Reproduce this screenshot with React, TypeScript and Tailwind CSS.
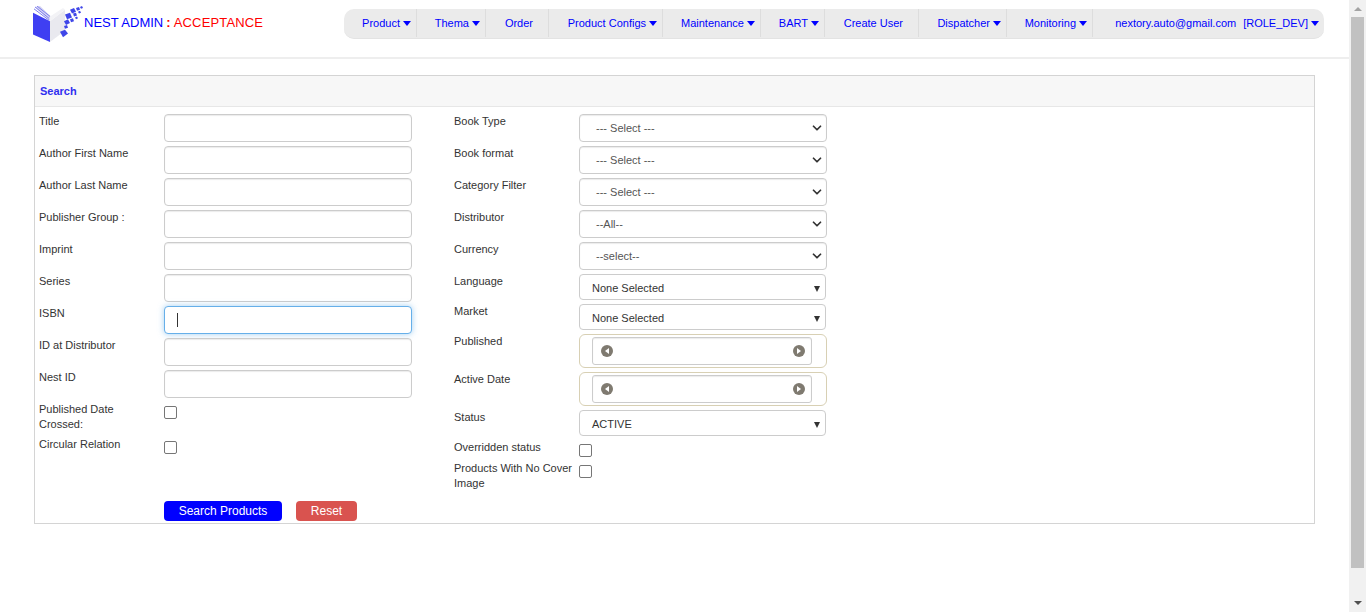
import React from 'react';
import { ChevronDown } from 'lucide-react';

const navItems = [
  { label: 'Product', width: 'w-[73px]', caret: true },
  { label: 'Thema', width: 'w-[69px]', caret: true },
  { label: 'Order', width: 'w-[63px]', caret: false },
  { label: 'Product Configs', width: 'w-[114px]', caret: true },
  { label: 'Maintenance', width: 'w-[98px]', caret: true },
  { label: 'BART', width: 'w-[64px]', caret: true },
  { label: 'Create User', width: 'w-[94px]', caret: false },
  { label: 'Dispatcher', width: 'w-[88px]', caret: true },
  { label: 'Monitoring', width: 'w-[86px]', caret: true },
];

const leftFields = ['Title', 'Author First Name', 'Author Last Name', 'Publisher Group :', 'Imprint', 'Series'];
const leftFieldsAfter = ['ID at Distributor', 'Nest ID'];

const selects = [
  { label: 'Book Type', value: '--- Select ---' },
  { label: 'Book format', value: '--- Select ---' },
  { label: 'Category Filter', value: '--- Select ---' },
  { label: 'Distributor', value: '--All--' },
  { label: 'Currency', value: '--select--' },
];

function Caret() {
  return <span className="ml-[3px] mr-[5px] h-0 w-0 border-x-[4px] border-t-[5px] border-x-transparent border-t-[#0000ff]" />;
}

function Logo() {
  return (
    <svg width="52" height="38" viewBox="0 0 52 40" preserveAspectRatio="none" className="mt-[4px] shrink-0">
      <path d="M18 16 L33 4 L33 26 L18 38 Z" fill="#e9e9ef" />
      <path d="M3 1 L8 0 L19 11 L18 16 Z" fill="#d5d5f2" />
      <path d="M2 3 L17 15 M3 1 L17 13 M5 0 L18 11" stroke="#7a7af0" strokeWidth="1" fill="none" />
      <path d="M18 11 L31 2 L33 4 L18 16 Z" fill="#f3f3f6" />
      <path d="M1 7 L18 16 L18 38 L1 30 Z" fill="#3f3ff2" />
      <g fill="#3f46e8">
        <path d="M38 4 L42 2 L44 6 L40 8 Z" />
        <path d="M44 2 L47 1 L48 4 L45 5 Z" />
        <path d="M48 1 L50 0 L51 2 L49 3 Z" />
        <path d="M33 9 L38 7 L40 12 L35 14 Z" />
        <path d="M41 8 L44 7 L45 10 L42 11 Z" />
        <path d="M46 6 L48 5 L49 7 L47 8 Z" />
        <path d="M32 16 L36 14 L38 18 L34 20 Z" />
        <path d="M38 14 L41 13 L42 16 L39 17 Z" />
        <path d="M43 12 L45 11 L46 13 L44 14 Z" />
        <path d="M32 21 L35 20 L36 23 L33 24 Z" />
        <path d="M28 27 L33 25 L36 29 L31 33 Z" />
      </g>
    </svg>
  );
}

function TextField({ label, focused }: { label: string; focused?: boolean }) {
  return (
    <div className="flex h-7">
      <label className="w-[125px] shrink-0 leading-[15px]">{label}</label>
      <div
        className={`h-7 w-[248px] rounded border bg-white px-3 ${
          focused
            ? 'flex items-center border-[#66afe9] shadow-[0_0_6px_rgba(102,175,233,0.6)]'
            : 'border-[#cccccc] shadow-[inset_0_1px_1px_rgba(0,0,0,0.08)]'
        }`}
      >
        {focused && <span className="h-[14px] w-px bg-[#333333]" />}
      </div>
    </div>
  );
}

function CheckRow({ label, className, boxClass }: { label: string; className: string; boxClass: string }) {
  return (
    <div className={`flex ${className}`}>
      <label className="w-[125px] shrink-0 pr-1 leading-[15px]">{label}</label>
      <span className={`h-[13px] w-[13px] rounded-[2px] border border-[#767676] bg-white ${boxClass}`} />
    </div>
  );
}

function SelectBox({ value }: { value: string }) {
  return (
    <div className="relative flex h-7 w-[248px] items-center rounded border border-[#cccccc] bg-white pl-4 shadow-[inset_0_1px_1px_rgba(0,0,0,0.08)]">
      <span className="text-[#555555]">{value}</span>
      <ChevronDown size={14} strokeWidth={3} className="absolute right-[2px] top-[6px] text-[#333333]" />
    </div>
  );
}

function MultiButton({ value }: { value: string }) {
  return (
    <div className="relative flex h-[26px] w-[247px] items-center rounded border border-[#cccccc] bg-white pl-3 pt-[2px] text-[#333333]">
      {value}
      <span className="absolute right-[5px] top-[11px] h-0 w-0 border-x-[3.5px] border-t-[6px] border-x-transparent border-t-[#333333]" />
    </div>
  );
}

function DateBox() {
  return (
    <div className="flex h-[34px] w-[248px] items-center rounded-md border border-[#d8d0b4] bg-white pl-3">
      <div className="flex h-7 w-[220px] items-center justify-between rounded-[3px] border border-[#cccccc] pl-2 pr-[6px] shadow-[inset_0_1px_1px_rgba(0,0,0,0.08)]">
        <span className="flex h-3 w-3 items-center justify-center rounded-full bg-[#7f7a70]">
          <span className="h-0 w-0 border-y-[3px] border-r-[4px] border-y-transparent border-r-white" />
        </span>
        <span className="flex h-3 w-3 items-center justify-center rounded-full bg-[#7f7a70]">
          <span className="h-0 w-0 border-y-[3px] border-l-[4px] border-y-transparent border-l-white" />
        </span>
      </div>
    </div>
  );
}

export default function App() {
  return (
    <div className="flex h-[612px] overflow-hidden bg-white font-['Liberation_Sans',Arial,sans-serif] text-[11px] text-[#333333]">
      <div className="min-w-0 flex-1">
        {/* Cabecera */}
        <header className="flex h-[59px] border-b-2 border-[#eeeeee]">
          <div className="ml-[32px] mt-[3px] flex h-[40px] w-[312px] items-center">
            <Logo />
            <span className="text-[13px] text-[#0000ff]">NEST ADMIN</span>
            <span className="ml-[3px] text-[13px] tracking-[0.15px] text-[#ff0000]">
              <span className="font-bold">:</span> ACCEPTANCE
            </span>
          </div>
          <nav className="mt-[9px] flex h-[30px] w-[980px] rounded-[10px] border-b border-[#e3e3e3] bg-[#ebebeb] pb-px text-[#0000ff]">
            {navItems.map((item) => (
              <a key={item.label} className={`flex ${item.width} items-center justify-end border-r border-[#dddddd]`}>
                <span className={item.caret ? '' : 'mr-[15px]'}>{item.label}</span>
                {item.caret && <Caret />}
              </a>
            ))}
            <a className="flex flex-1 items-center justify-end">
              <span>nextory.auto@gmail.com</span>
              <span className="ml-[7px]">[ROLE_DEV]</span>
              <Caret />
            </a>
          </nav>
        </header>

        {/* Formulario de búsqueda */}
        <section className="ml-[34px] mt-4 h-[449px] w-[1281px] border border-[#d4d4d4]">
          <div className="flex h-[31px] items-center border-b border-[#e7e7e7] bg-[#f7f7f7] pl-[5px] font-bold text-[#3030f0]">
            Search
          </div>
          <div className="flex pl-1 pt-[7px]">
            <div className="flex w-[415px] flex-col gap-1">
              {leftFields.map((label) => (
                <TextField key={label} label={label} />
              ))}
              <TextField label="ISBN" focused />
              {leftFieldsAfter.map((label) => (
                <TextField key={label} label={label} />
              ))}
              <CheckRow label="Published Date Crossed:" className="h-[30px]" boxClass="mt-1" />
              <CheckRow label="Circular Relation" className="mt-px h-[29px]" boxClass="mt-1" />
            </div>
            <div className="flex flex-col">
              {selects.map((s) => (
                <div key={s.label} className="mb-1 flex h-7">
                  <label className="w-[125px] shrink-0 leading-[15px]">{s.label}</label>
                  <SelectBox value={s.value} />
                </div>
              ))}
              <div className="mb-1 flex h-[26px]">
                <label className="w-[125px] shrink-0 leading-[15px]">Language</label>
                <MultiButton value="None Selected" />
              </div>
              <div className="mb-1 flex h-[26px]">
                <label className="w-[125px] shrink-0 leading-[15px]">Market</label>
                <MultiButton value="None Selected" />
              </div>
              <div className="mb-1 flex h-[34px]">
                <label className="w-[125px] shrink-0 leading-[15px]">Published</label>
                <DateBox />
              </div>
              <div className="mb-1 flex h-[34px]">
                <label className="w-[125px] shrink-0 leading-[15px]">Active Date</label>
                <DateBox />
              </div>
              <div className="mb-1 flex h-[26px]">
                <label className="w-[125px] shrink-0 leading-[15px]">Status</label>
                <MultiButton value="ACTIVE" />
              </div>
              <CheckRow label="Overridden status" className="mb-[6px] h-[15px]" boxClass="mt-1" />
              <CheckRow label="Products With No Cover Image" className="h-[30px]" boxClass="mt-1" />
            </div>
          </div>
          <div className="ml-[129px] mt-[10px] flex gap-[14px] text-[#ffffff]">
            <button className="h-5 w-[118px] rounded bg-[#0000ff] text-center text-xs">Search Products</button>
            <button className="h-5 w-[61px] rounded bg-[#d9534f] text-center text-xs">Reset</button>
          </div>
        </section>
      </div>

      {/* Barra de desplazamiento */}
      <div className="flex w-[17px] shrink-0 flex-col items-center bg-[#f1f1f1]">
        <div className="flex h-[17px] items-center">
          <span className="h-0 w-0 border-x-4 border-b-4 border-x-transparent border-b-[#a3a3a3]" />
        </div>
        <div className="h-[551px] w-[13px] bg-[#c1c1c1]" />
        <div className="flex flex-1 items-end pb-[7px]">
          <span className="h-0 w-0 border-x-4 border-t-4 border-x-transparent border-t-[#505050]" />
        </div>
      </div>
    </div>
  );
}
